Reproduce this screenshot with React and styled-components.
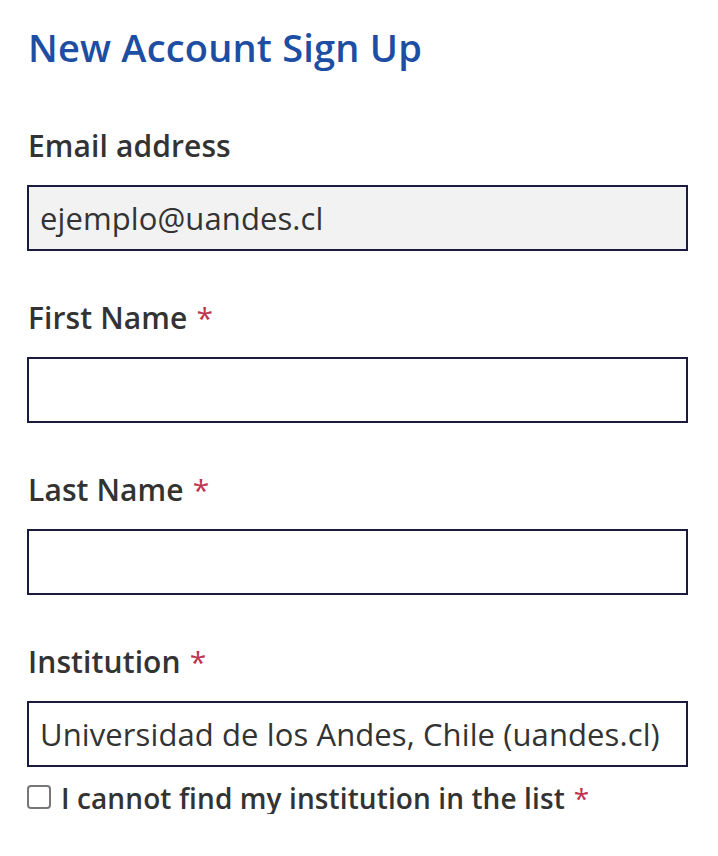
import React from 'react';
import styled, { createGlobalStyle } from 'styled-components';

const GlobalStyle = createGlobalStyle`
	html, body {
		margin: 0;
		padding: 0;
		background: #ffffff;
	}
	body {
		font-family: 'Open Sans', 'Noto Sans', sans-serif;
		color: #333333;
	}
`;

const Page = styled.div`
	padding: 25px 30px 0 27px;
	width: 718px;
	box-sizing: border-box;
`;

const Title = styled.h1`
	margin: 0 0 59px 1px;
	font-size: 38px;
	line-height: 44px;
	font-weight: 600;
	letter-spacing: 0.2px;
	color: #1d4ea3;
`;

const Field = styled.div`
	display: flex;
	flex-direction: column;
	margin-bottom: 49px;
`;

const Label = styled.label`
	display: block;
	margin: 0 0 21px 1px;
	font-size: 30px;
	line-height: 36px;
	font-weight: 600;
	letter-spacing: 0.1px;
	color: #333333;
`;

const Required = styled.span`
	color: #c0334d;
	margin-left: 9px;
	font-weight: 400;
`;

const Input = styled.input`
	box-sizing: border-box;
	width: 661px;
	height: 66px;
	margin: 0;
	padding: 0 11px;
	border: 2px solid #1b1a3f;
	border-radius: 0;
	background: ${(p) => (p.disabled ? '#f2f2f2' : '#ffffff')};
	font-family: inherit;
	font-size: 31px;
	letter-spacing: 0.1px;
	color: #333333;
	outline: none;
`;

const CheckRow = styled.label`
	display: flex;
	align-items: center;
	gap: 10px;
	margin-top: -34px;
	font-size: 28px;
	line-height: 32px;
	font-weight: 600;
	letter-spacing: 0.1px;
	color: #333333;
`;

const Box = styled.span`
	box-sizing: border-box;
	width: 24px;
	height: 24px;
	margin-top: -2px;
	border: 2px solid #777777;
	border-radius: 4px;
	background: #ffffff;
	flex-shrink: 0;
`;

const fields = [
	{ label: 'Email address', value: 'ejemplo@uandes.cl', disabled: true },
	{ label: 'First Name', required: true, value: '' },
	{ label: 'Last Name', required: true, value: '' },
	{ label: 'Institution', required: true, value: 'Universidad de los Andes, Chile (uandes.cl)' },
];

const App = () => {
	return (
		<Page>
			<GlobalStyle />
			<Title>New Account Sign Up</Title>

			{fields.map((f) => (
				<Field key={f.label}>
					<Label>
						{f.label}
						{f.required && <Required>*</Required>}
					</Label>
					<Input defaultValue={f.value} disabled={f.disabled} readOnly />
				</Field>
			))}

			<CheckRow>
				<Box />
				<span>
					I cannot find my institution in the list
					<Required>*</Required>
				</span>
			</CheckRow>
		</Page>
	);
};

export default App;
